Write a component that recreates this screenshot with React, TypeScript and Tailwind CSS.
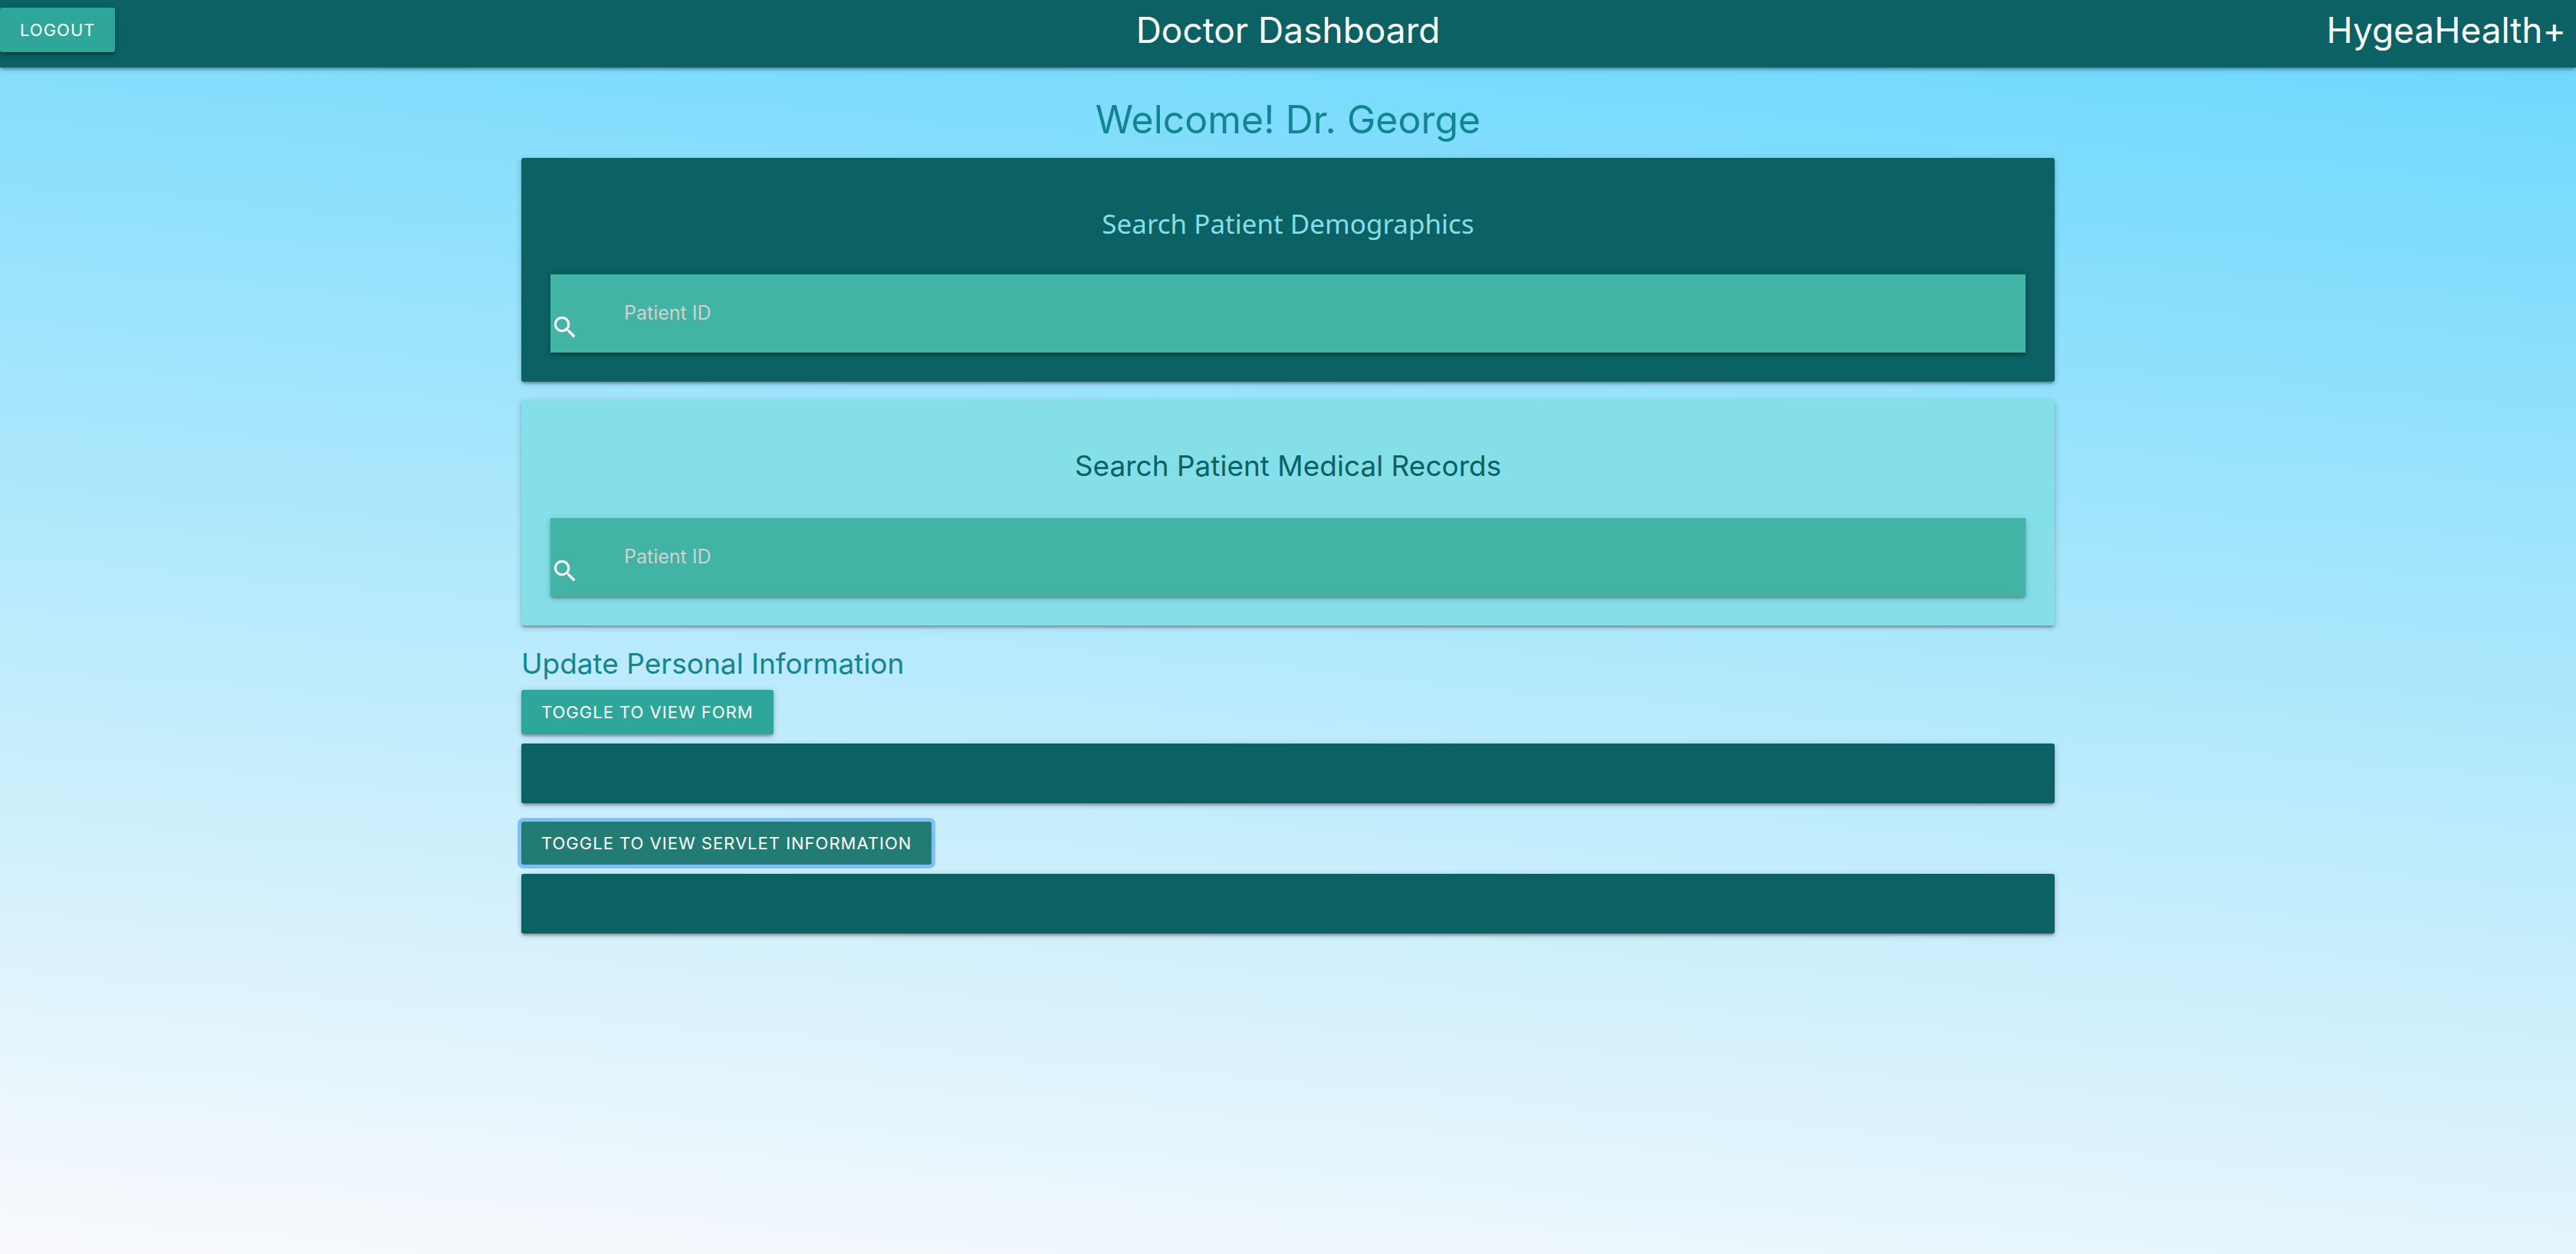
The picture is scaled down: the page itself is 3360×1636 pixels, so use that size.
import { MdSearch } from "react-icons/md";

const depth =
  "shadow-[0_3px_3px_rgba(0,0,0,0.14),0_5px_2px_-3px_rgba(0,0,0,0.12),0_2px_8px_rgba(0,0,0,0.2)]";

const buttonBase =
  "rounded-[3px] px-[26px] text-[22px] leading-[58px] tracking-[1px] uppercase text-white";

function SearchBar({ id }: { id: string }) {
  return (
    <form
      role="search"
      onSubmit={(e) => e.preventDefault()}
      className={`relative flex h-[102px] bg-[#42b4a6] ${depth}`}
    >
      <label htmlFor={id} className="absolute bottom-[14px] left-0 text-white">
        <MdSearch size={38} aria-hidden="true" />
      </label>
      <input
        id={id}
        type="text"
        aria-label="Patient ID"
        placeholder="Patient ID"
        className="w-full min-w-0 bg-transparent pr-8 pl-[96px] text-[25px] text-white outline-none placeholder:text-[#d1d1d1]"
      />
    </form>
  );
}

function Panel() {
  return <div className={`h-[78px] rounded-[3px] bg-[#0b6163] ${depth}`} />;
}

export default function App() {
  return (
    <div className="min-h-screen bg-[linear-gradient(185deg,#68d7fc,#fafafc)] font-['Inter','Liberation_Sans',sans-serif]">
      <header
        className={`grid h-[88px] grid-cols-[1fr_auto_1fr] items-start bg-[#0b6163] text-[46px] leading-[78px] text-white ${depth}`}
      >
        <div className="flex pt-[10px]">
          <button type="button" className={`${buttonBase} bg-[#2ea69a] ${depth}`}>
            Logout
          </button>
        </div>
        <h1>Doctor Dashboard</h1>
        <a href="#" className="justify-self-end pr-[13px]">
          HygeaHealth+
        </a>
      </header>

      <main className="mx-auto w-[70%] max-w-[2000px] pb-12">
        <h2 className="pt-[38px] pb-[20px] text-center text-[50px] leading-[60px] text-[#12858f]">
          Welcome! Dr. George
        </h2>

        <section className={`rounded-[3px] bg-[#0b6163] p-[38px] ${depth}`}>
          <h3 className="pt-[24px] pb-[42px] text-center font-['Noto_Sans',sans-serif] text-[35px] leading-[48px] text-[#84dfe8]">
            Search Patient Demographics
          </h3>
          <SearchBar id="demographics-id" />
        </section>

        <section className={`mt-[24px] rounded-[3px] bg-[#84dfe8] p-[38px] ${depth}`}>
          <h3 className="pt-[24px] pb-[44px] text-center text-[37px] leading-[48px] text-[#0b6163]">
            Search Patient Medical Records
          </h3>
          <SearchBar id="records-id" />
        </section>

        <h3 className="pt-[26px] pb-[10px] text-[37px] leading-[48px] text-[#12858f]">
          Update Personal Information
        </h3>
        <div className="mb-[12px] flex">
          <button type="button" className={`${buttonBase} bg-[#2ea69a] ${depth}`}>
            Toggle to view form
          </button>
        </div>
        <Panel />

        <div className="mt-[24px] mb-[12px] flex">
          <button
            type="button"
            className="rounded-[3px] bg-[#237c73] px-[26px] text-[22px] leading-[56px] tracking-[1px] text-white uppercase ring-5 ring-[#7dbffb]"
          >
            Toggle to view servlet information
          </button>
        </div>
        <Panel />
      </main>
    </div>
  );
}
